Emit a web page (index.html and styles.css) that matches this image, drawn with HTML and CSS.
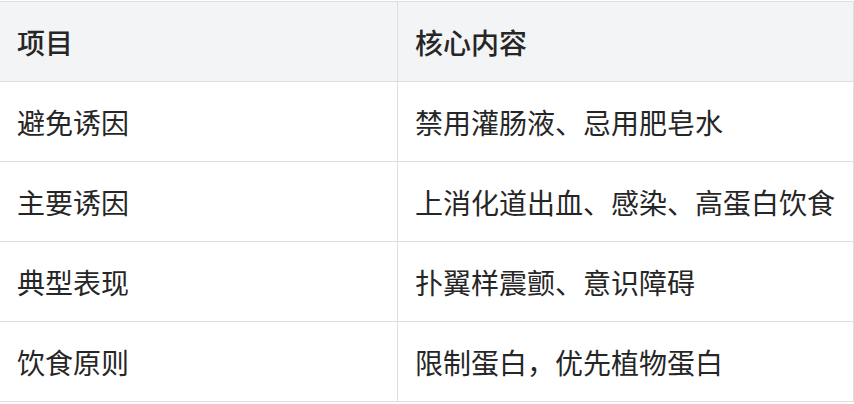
FILE: index.html
```html
<!DOCTYPE html>
<html lang="zh-CN">
<head>
<meta charset="utf-8">
<link rel="stylesheet" href="styles.css">
</head>
<body>
<table class="info-table">
  <colgroup><col class="col-item"><col class="col-content"></colgroup>
  <thead>
    <tr><th>项目</th><th>核心内容</th></tr>
  </thead>
  <tbody>
    <tr><td>避免诱因</td><td>禁用灌肠液、忌用肥皂水</td></tr>
    <tr><td>主要诱因</td><td>上消化道出血、感染、高蛋白饮食</td></tr>
    <tr><td>典型表现</td><td>扑翼样震颤、意识障碍</td></tr>
    <tr><td>饮食原则</td><td>限制蛋白，优先植物蛋白</td></tr>
  </tbody>
</table>
</body>
</html>
```
FILE: styles.css
```css
html, body {
  margin: 0;
  padding: 0;
  background: #ffffff;
}
body {
  padding-top: 1px;
  font-family: "Noto Sans CJK SC", "Noto Sans", sans-serif;
  color: #262626;
}
.info-table {
  border-collapse: collapse;
  margin-left: -1px;
  width: 855px;
  table-layout: fixed;
}
.col-item { width: 398px; }
.info-table th,
.info-table td {
  border: 1px solid #dedede;
  height: 80px;
  padding: 0 17px;
  font-size: 28px;
  line-height: 1;
  text-align: left;
  vertical-align: middle;
  box-sizing: border-box;
}
.info-table th {
  background: #f3f4f6;
  font-weight: 500;
}
.info-table td {
  font-weight: 400;
}
```
